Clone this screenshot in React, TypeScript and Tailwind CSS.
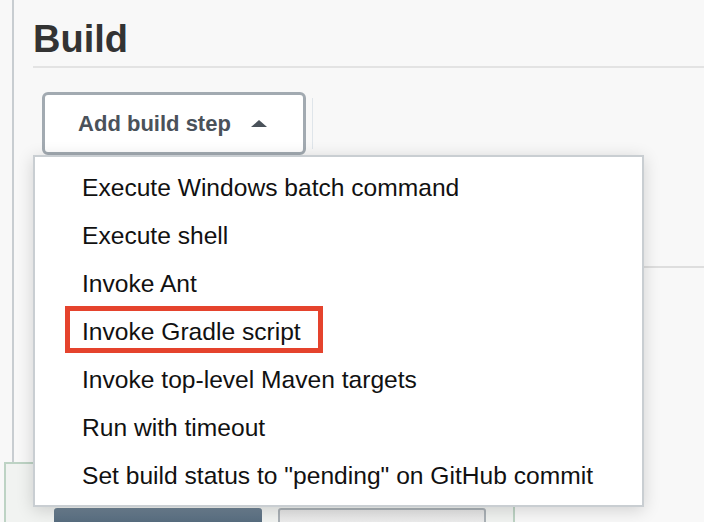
const steps: string[] = [
  'Execute Windows batch command',
  'Execute shell',
  'Invoke Ant',
  'Invoke Gradle script',
  'Invoke top-level Maven targets',
  'Run with timeout',
  'Set build status to "pending" on GitHub commit',
];

const App: React.FC = () => {
  return (
    <div className="relative flex h-[522px] w-[704px] flex-col overflow-hidden bg-[#f8f8f8] font-['Liberation_Sans',Arial,sans-serif]">
      {/* build section */}
      <div className="ml-[12px] h-[462px] shrink-0 border-l-2 border-[#c8cdd1] pl-[19px] pt-[20px]">
        <h2 className="text-[38px] font-bold leading-[38px] text-[#333]">Build</h2>
        <div className="mt-[8px] h-[2px] bg-[#e3e3e3]" />

        <div className="relative mt-[24px] flex">
          <button className="ml-[9px] flex h-[63px] w-[264px] items-center justify-center rounded-[6px] border-[3px] border-[#a2aab1] bg-white pr-[3px] text-[22px] font-bold text-[#4a525a]">
            Add build step
            <span className="ml-[20px] h-0 w-0 border-b-[7px] border-l-[8px] border-r-[8px] border-b-[#4a525a] border-l-transparent border-r-transparent" />
          </button>
          <div className="my-[6px] ml-[6px] w-px bg-[#dfe5ea]" />

          {/* dropdown menu */}
          <ul className="absolute left-0 top-[63px] z-10 w-[611px] border-2 border-[#c9ced2] bg-white py-[6px] shadow-[0_3px_16px_rgba(0,0,0,0.16)]">
            {steps.map((step, index) => (
              <li key={index} className="relative h-[48px] pl-[47px] pt-px text-[24.6px] leading-[48px] text-[#111]">
                {step}
                {index === 3 && (
                  <span className="absolute left-[30px] top-[-1px] h-[47px] w-[258px] border-[5px] border-[#e5432d]" />
                )}
              </li>
            ))}
          </ul>
        </div>

        <div className="mt-[111px] h-[2px] bg-[#dedede]" />
      </div>

      {/* next section */}
      <div className="ml-[4px] flex w-[511px] flex-1 gap-[16px] border-l-2 border-r-2 border-t-2 border-[#bdd3c4] bg-[#f1f3f1] pl-[48px] pt-[44px]">
        <div className="h-[30px] w-[208px] rounded-t-[3px] bg-gradient-to-b from-[#6e8293] to-[#3d5468]" />
        <div className="h-[30px] w-[208px] rounded-t-[3px] border-2 border-[#aab1b6] bg-gradient-to-b from-[#e4e4e4] to-[#f5f5f5]" />
      </div>
    </div>
  );
};

export default App;
